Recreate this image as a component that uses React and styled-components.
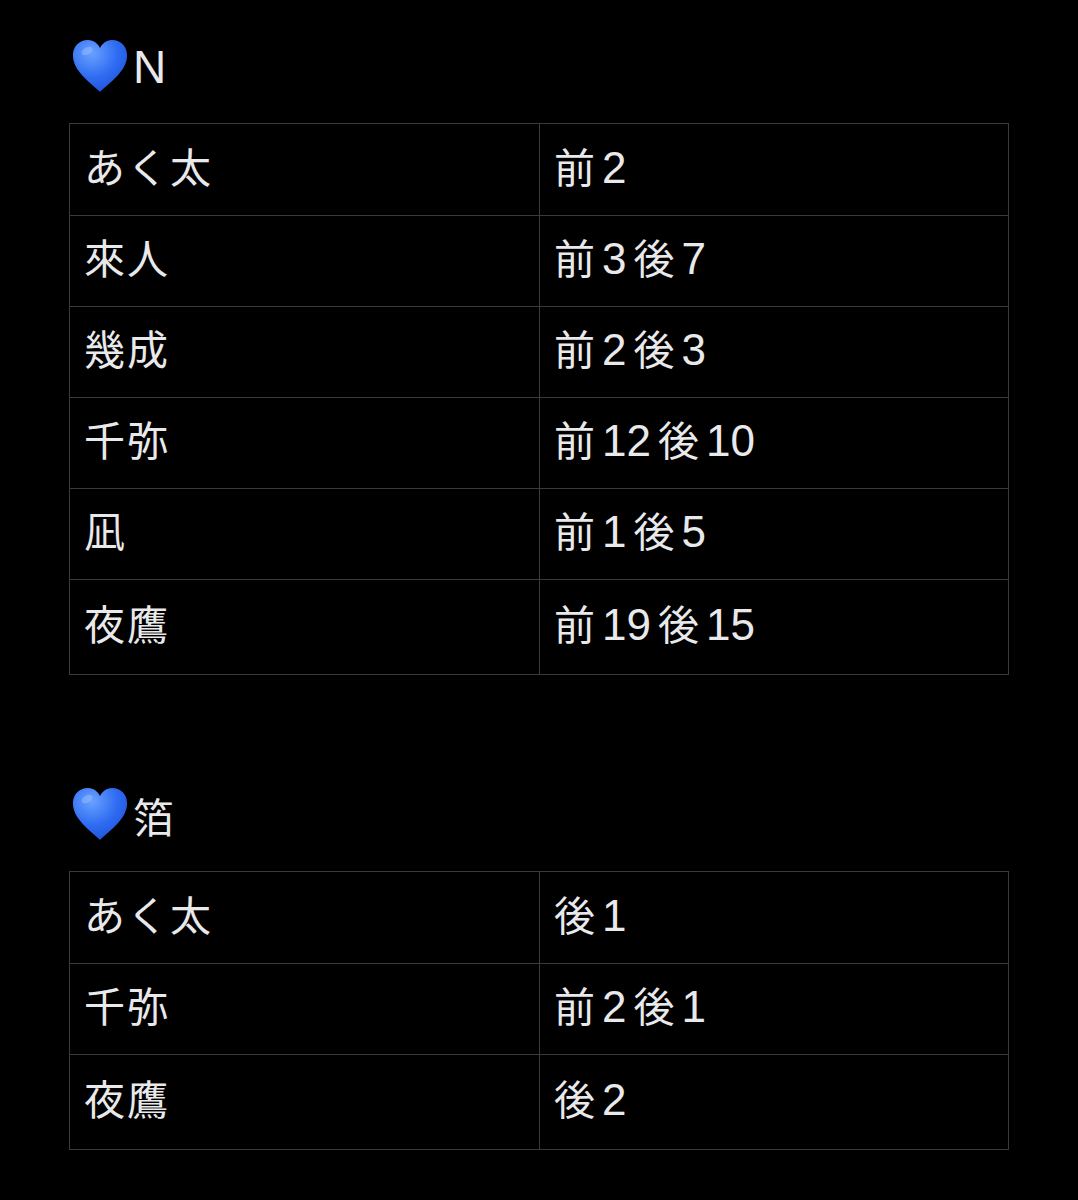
import React from "react";
import styled, { createGlobalStyle } from "styled-components";

const GlobalStyle = createGlobalStyle`
  html, body {
    margin: 0;
    padding: 0;
    background: #000;
  }
  body {
    font-family: "Liberation Sans", "Noto Sans CJK JP", sans-serif;
    color: #e9e9eb;
  }
`;

const Page = styled.div`
  width: 1078px;
  min-height: 1200px;
  padding: 26px 0 0 69px;
  box-sizing: border-box;
  background: #000;
`;

const Section = styled.section`
  display: flex;
  flex-direction: column;
  gap: 17px;
  margin-bottom: 99px;
`;

const Heading = styled.h2`
  display: flex;
  align-items: center;
  gap: 5px;
  height: 80px;
  margin: 0;
  padding-left: 3px;
  font-weight: 400;
  font-size: 41px;
  color: #e9e9eb;
`;

const Label = styled.span`
  font-size: ${p => (p.$latin ? "46px" : "41px")};
  padding-top: 2px;
`;

const Table = styled.div`
  width: 940px;
  border: 1px solid #3b3b3e;
  box-sizing: border-box;
`;

const Row = styled.div`
  display: grid;
  grid-template-columns: 469px 1fr;
  height: ${p => (p.$last ? "95px" : "91px")};
  border-top: ${p => (p.$first ? "none" : "1px solid #3b3b3e")};
  box-sizing: border-box;
`;

const Cell = styled.div`
  display: flex;
  align-items: center;
  padding: 0 0 10px 14px;
  font-size: 41px;
  letter-spacing: 2px;
  white-space: nowrap;
  & + & {
    border-left: 1px solid #3b3b3e;
  }
`;

const Num = styled.span`
  font-size: 44px;
  margin: 0 7px 0 5px;
  letter-spacing: 0;
  position: relative;
  top: 3px;
`;

const Heart = () => (
  <svg width="56" height="54" viewBox="0 0 56 54">
    <defs>
      <radialGradient id="hg" cx="0.35" cy="0.25" r="0.85">
        <stop offset="0" stopColor="#6aa2ff" />
        <stop offset="0.55" stopColor="#2f6cf2" />
        <stop offset="1" stopColor="#1d4fd6" />
      </radialGradient>
    </defs>
    <path
      d="M28 53 C23 47 2 34 1 18 C0 8 7 1 16 1 C22 1 26 5 28 9 C30 5 34 1 40 1 C49 1 56 8 55 18 C54 34 33 47 28 53 Z"
      fill="url(#hg)"
    />
    <ellipse cx="15" cy="12" rx="6" ry="3.5" fill="#a9c8ff" opacity="0.4" transform="rotate(-30 15 12)" />
  </svg>
);

const renderValue = value =>
  value.split(/(\d+)/).filter(Boolean).map((part, i) =>
    /\d/.test(part) ? <Num key={i}>{part}</Num> : <React.Fragment key={i}>{part}</React.Fragment>
  );

const sections = [
  {
    title: "N",
    latin: true,
    rows: [
      ["あく太", "前2"],
      ["來人", "前3後7"],
      ["幾成", "前2後3"],
      ["千弥", "前12後10"],
      ["凪", "前1後5"],
      ["夜鷹", "前19後15"],
    ],
  },
  {
    title: "箔",
    rows: [
      ["あく太", "後1"],
      ["千弥", "前2後1"],
      ["夜鷹", "後2"],
    ],
  },
];

export default function App() {
  return (
    <Page>
      <GlobalStyle />
      {sections.map(section => (
        <Section key={section.title}>
          <Heading>
            <Heart />
            <Label $latin={section.latin}>{section.title}</Label>
          </Heading>
          <Table>
            {section.rows.map(([name, value], i) => (
              <Row key={name} $first={i === 0} $last={i === section.rows.length - 1}>
                <Cell>{name}</Cell>
                <Cell>{renderValue(value)}</Cell>
              </Row>
            ))}
          </Table>
        </Section>
      ))}
    </Page>
  );
}
